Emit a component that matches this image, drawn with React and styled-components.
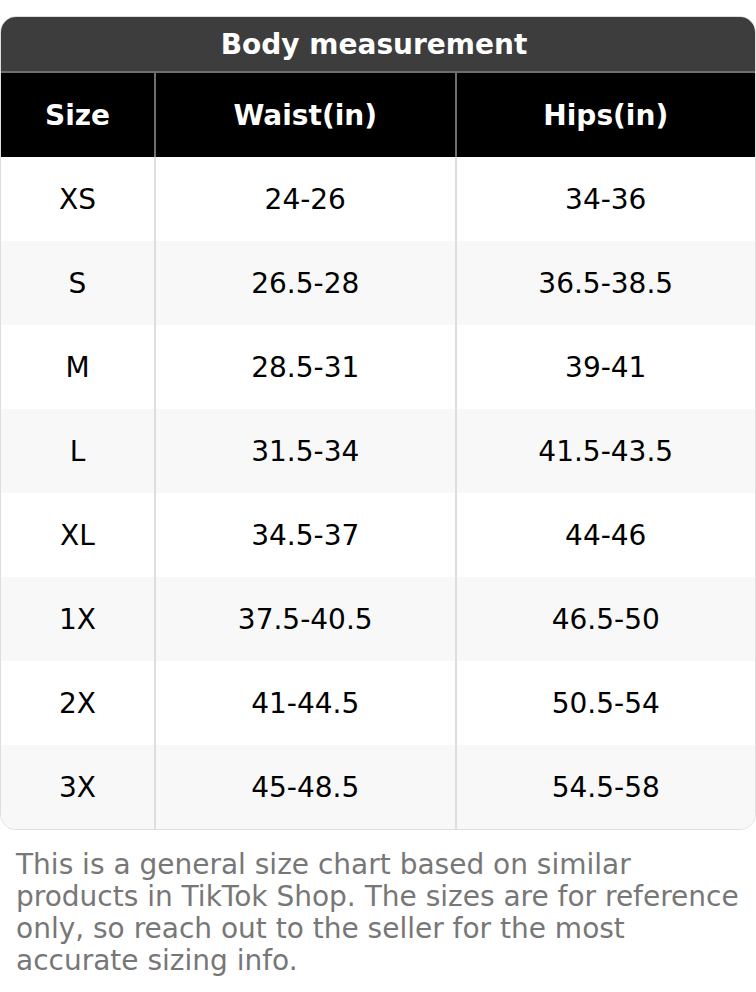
import React from 'react';
import styled, { createGlobalStyle } from 'styled-components';

const rows = [
  ['XS', '24-26', '34-36'],
  ['S', '26.5-28', '36.5-38.5'],
  ['M', '28.5-31', '39-41'],
  ['L', '31.5-34', '41.5-43.5'],
  ['XL', '34.5-37', '44-46'],
  ['1X', '37.5-40.5', '46.5-50'],
  ['2X', '41-44.5', '50.5-54'],
  ['3X', '45-48.5', '54.5-58'],
];

const App = () => {
  return (
    <>
      <GlobalStyle />
      <StPage>
        <StChart>
          <StTitle>Body measurement</StTitle>
          <StHeadRow>
            <StHeadCell>Size</StHeadCell>
            <StHeadCell>Waist(in)</StHeadCell>
            <StHeadCell>Hips(in)</StHeadCell>
          </StHeadRow>
          {rows.map((row, index) => (
            <StRow key={row[0]} $striped={index % 2 === 1}>
              {row.map((value, i) => (
                <StCell key={i}>{value}</StCell>
              ))}
            </StRow>
          ))}
        </StChart>
        <StNote>
          This is a general size chart based on similar products in TikTok Shop. The sizes are for
          reference only, so reach out to the seller for the most accurate sizing info.
        </StNote>
      </StPage>
    </>
  );
};

const GlobalStyle = createGlobalStyle`
  body {
    margin: 0;
    background: #fff;
    font-family: "DejaVu Sans", sans-serif;
  }
`;

const StPage = styled.div`
  width: 756px;
  padding-top: 16px;
`;

const StChart = styled.div`
  border: 1px solid #dedede;
  border-radius: 16px;
  overflow: hidden;
`;

const StTitle = styled.div`
  height: 54px;
  display: flex;
  align-items: center;
  justify-content: center;
  padding-right: 8px;
  background: #3d3d3d;
  border-bottom: 2px solid #6e6e6e;
  color: #fff;
  font-size: 28px;
  font-weight: 700;
`;

const grid = `
  display: grid;
  grid-template-columns: 153px 1fr 1fr;
`;

const StHeadRow = styled.div`
  ${grid}
  height: 84px;
  background: #000;
  & > div + div {
    border-left: 2px solid #6e6e6e;
  }
`;

const StHeadCell = styled.div`
  display: flex;
  align-items: center;
  justify-content: center;
  color: #fff;
  font-size: 28px;
  font-weight: 700;
`;

const StRow = styled.div`
  ${grid}
  height: 84px;
  background: ${({ $striped }) => ($striped ? '#f8f8f8' : '#fff')};
  & > div + div {
    border-left: 2px solid #dedede;
  }
`;

const StCell = styled.div`
  display: flex;
  align-items: center;
  justify-content: center;
  color: #000;
  font-size: 28px;
`;

const StNote = styled.p`
  margin: 0;
  padding: 19px 12px 0 16px;
  color: #777;
  font-size: 28px;
  line-height: 32px;
`;

export default App;
